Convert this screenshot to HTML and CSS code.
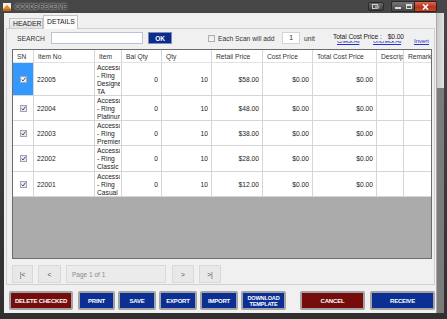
FILE: index.html
```html
<!DOCTYPE html>
<html>
<head>
<meta charset="utf-8">
<link rel="stylesheet" href="styles.css">
</head>
<body>
<div class="window">
  <div class="titlebar">
    <svg class="appicon" width="8" height="8" viewBox="0 0 8 8"><rect x="0" y="0" width="8" height="8" fill="#f4f0e4"/><path d="M0 6 L4 2 L8 6 Z" fill="#e08a1a"/><rect x="0" y="6" width="8" height="2" fill="#c86a10"/></svg>
    <span class="title">GOODS RECEIVE</span>
    <div class="caption">
      <span class="cbtn extra"><svg width="8" height="5" viewBox="0 0 8 5"><rect x="0.5" y="0.5" width="5" height="4" fill="none" stroke="#cfcfcf"/><rect x="3" y="1.5" width="4.5" height="3" fill="#9a9a9a"/></svg></span>
      <span class="cgroup">
        <span class="cbtn min"><span class="minbar"></span></span>
        <span class="cbtn max"><span class="maxbox"></span></span>
      </span>
      <span class="cbtn close"><svg width="7" height="6" viewBox="0 0 7 6"><path d="M1 0.5 L6 5.5 M6 0.5 L1 5.5" stroke="#fff" stroke-width="1.6"/></svg></span>
    </div>
  </div>
  <div class="frame">
    <div class="client">
      <div class="tabs">
        <span class="tab">HEADER</span>
        <span class="tab active">DETAILS</span>
      </div>
      <div class="panel">
        <div class="searchbar">
          <span class="lbl-search">SEARCH</span>
          <span class="input search-input"></span>
          <span class="ok">OK</span>
          <span class="scan-chk"></span>
          <span class="scan-text">Each Scan will add</span>
          <span class="input qty-input">1</span>
          <span class="unit">unit</span>
          <div class="totals">
            <div class="total-label"><span>Total Cost Price :</span><span class="total-val">$0.00</span></div>
            <div class="links">
              <span class="link l1">Check All</span>
              <span class="link l2">Uncheck All</span>
            </div>
            <span class="link l3">Invert</span>
          </div>
        </div>
        <div class="grid">
          <div class="row head">
            <div class="cell">SN</div><div class="cell">Item No</div><div class="cell">Item</div><div class="cell">Bal Qty</div><div class="cell">Qty</div><div class="cell">Retail Price</div><div class="cell">Cost Price</div><div class="cell">Total Cost Price</div><div class="cell">Descrip</div><div class="cell">Remark</div>
          </div>
          <div class="row h33">
            <div class="cell sn sel"><span class="chk"><svg width="5" height="5" viewBox="0 0 5 5"><path d="M0.6 2.6 L2 4 L4.5 0.6" fill="none" stroke="#2d4f9e" stroke-width="1"/></svg></span></div>
            <div class="cell code">22005</div><div class="cell item"><div class="clip">Accessories - Ring Designer TA</div></div><div class="cell num">0</div><div class="cell num">10</div><div class="cell num">$58.00</div><div class="cell num">$0.00</div><div class="cell num">$0.00</div><div class="cell"></div><div class="cell"></div>
          </div>
          <div class="row h25">
            <div class="cell sn"><span class="chk"><svg width="5" height="5" viewBox="0 0 5 5"><path d="M0.6 2.6 L2 4 L4.5 0.6" fill="none" stroke="#2d4f9e" stroke-width="1"/></svg></span></div>
            <div class="cell code">22004</div><div class="cell item"><div class="clip">Accessories - Ring Platinum</div></div><div class="cell num">0</div><div class="cell num">10</div><div class="cell num">$48.00</div><div class="cell num">$0.00</div><div class="cell num">$0.00</div><div class="cell"></div><div class="cell"></div>
          </div>
          <div class="row h25">
            <div class="cell sn"><span class="chk"><svg width="5" height="5" viewBox="0 0 5 5"><path d="M0.6 2.6 L2 4 L4.5 0.6" fill="none" stroke="#2d4f9e" stroke-width="1"/></svg></span></div>
            <div class="cell code">22003</div><div class="cell item"><div class="clip">Accessories - Ring Premier</div></div><div class="cell num">0</div><div class="cell num">10</div><div class="cell num">$38.00</div><div class="cell num">$0.00</div><div class="cell num">$0.00</div><div class="cell"></div><div class="cell"></div>
          </div>
          <div class="row h26">
            <div class="cell sn"><span class="chk"><svg width="5" height="5" viewBox="0 0 5 5"><path d="M0.6 2.6 L2 4 L4.5 0.6" fill="none" stroke="#2d4f9e" stroke-width="1"/></svg></span></div>
            <div class="cell code">22002</div><div class="cell item"><div class="clip">Accessories - Ring Classic</div></div><div class="cell num">0</div><div class="cell num">10</div><div class="cell num">$28.00</div><div class="cell num">$0.00</div><div class="cell num">$0.00</div><div class="cell"></div><div class="cell"></div>
          </div>
          <div class="row h25">
            <div class="cell sn"><span class="chk"><svg width="5" height="5" viewBox="0 0 5 5"><path d="M0.6 2.6 L2 4 L4.5 0.6" fill="none" stroke="#2d4f9e" stroke-width="1"/></svg></span></div>
            <div class="cell code">22001</div><div class="cell item"><div class="clip">Accessories - Ring Casual</div></div><div class="cell num">0</div><div class="cell num">10</div><div class="cell num">$12.00</div><div class="cell num">$0.00</div><div class="cell num">$0.00</div><div class="cell"></div><div class="cell"></div>
          </div>
        </div>
        <div class="pager">
          <span class="pbtn w21">|&lt;</span>
          <span class="pbtn w23">&lt;</span>
          <span class="pageinfo">Page 1 of 1</span>
          <span class="pbtn w22 gap6">&gt;</span>
          <span class="pbtn w22">&gt;|</span>
        </div>
      </div>
      <div class="actions">
        <span class="btn red w64">DELETE CHECKED</span>
        <span class="btn blue w37 g5">PRINT</span>
        <span class="btn blue w38">SAVE</span>
        <span class="btn blue w38">EXPORT</span>
        <span class="btn blue w38">IMPORT</span>
        <span class="btn blue w45 two">DOWNLOAD<br>TEMPLATE</span>
        <span class="btn red w65 g14">CANCEL</span>
        <span class="btn blue w65 g5">RECEIVE</span>
      </div>
    </div>
    <div class="vscroll"><div class="thumb"></div></div>
  </div>
</div>
</body>
</html>
```

FILE: styles.css
```css
* { box-sizing: border-box; }
html, body { margin: 0; padding: 0; }
body {
  width: 447px;
  height: 319px;
  overflow: hidden;
  font-family: "Liberation Sans", Arial, sans-serif;
  font-size: 6.7px;
  color: #222;
  background: #3a3a3a;
}
.window {
  width: 447px;
  height: 319px;
  display: flex;
  flex-direction: column;
  background: linear-gradient(#474747, #2f2f2f);
}
.titlebar {
  height: 13px;
  display: flex;
  align-items: center;
  padding-left: 3px;
}
.appicon { display: block; margin-right: 4px; }
.title {
  font-size: 6.3px;
  color: #1e1e1e;
  text-shadow: 0 0 2px #e6e6e6, 0 0 3px #d0d0d0;
  letter-spacing: -0.1px;
}
.caption {
  margin-left: auto;
  margin-right: 10px;
  display: flex;
  align-items: flex-start;
  height: 13px;
  padding-top: 1px;
}
.cbtn {
  display: flex;
  align-items: center;
  justify-content: center;
  height: 10px;
}
.extra {
  width: 16px;
  height: 9px;
  margin-top: 1px;
  border: 1px solid #2a2a2a;
  border-radius: 2px;
  background: linear-gradient(#6a6a6a, #3c3c3c);
  margin-right: 7px;
}
.cgroup {
  display: flex;
  border: 1px solid #2a2a2a;
  border-right: none;
  border-radius: 2px 0 0 2px;
  background: linear-gradient(#767676, #454545);
  height: 11px;
}
.min, .max { width: 11px; height: 9px; }
.minbar { width: 6px; height: 2px; background: #dcdcdc; margin-top: 3px; }
.maxbox { width: 6px; height: 5px; border: 1px solid #dcdcdc; border-top-width: 2px; }
.close {
  width: 23px;
  height: 11px;
  border: 1px solid #3a1a14;
  border-radius: 0 2px 2px 0;
  background: linear-gradient(#e06a52, #b8321e 55%, #c44a30);
}

.frame {
  flex: 1;
  display: flex;
  padding: 0 0 6px 4px;
}
.client {
  width: 432px;
  height: 300px;
  background: #f0f0f0;
  display: flex;
  flex-direction: column;
}
.vscroll {
  width: 8px;
  height: 300px;
  background: #7b7b7b;
  border-left: 1px solid #a8a8a8;
}
.thumb {
  height: 75px;
  background: linear-gradient(90deg, #c9c9c9, #e2e2e2);
}

.tabs {
  display: flex;
  align-items: flex-end;
  height: 15px;
  padding: 2px 0 0 5px;
}
.tab {
  height: 10px;
  width: 34px;
  border: 1px solid #c4c4c4;
  border-bottom: none;
  background: linear-gradient(#f2f2f2, #e2e2e2);
  padding-left: 3px;
  line-height: 9px;
  font-size: 6.8px;
  color: #222;
}
.tab.active {
  height: 14px;
  width: 35px;
  background: #fbfbfb;
  line-height: 12px;
  margin-bottom: -1px;
  position: relative;
  z-index: 1;
}
.panel {
  margin-left: 2px;
  width: 429px;
  height: 257px;
  border: 1px solid #cfcfcf;
  background: #f0f0f0;
  padding: 3px 0 1px 5px;
  display: flex;
  flex-direction: column;
}

.searchbar {
  height: 12px;
  display: flex;
  align-items: center;
}
.lbl-search { width: 39px; padding-left: 5px; color: #333; }
.input {
  height: 12px;
  background: #fff;
  border: 1px solid #b7c3d6;
}
.search-input { width: 92px; }
.ok {
  width: 24px;
  height: 12px;
  margin-left: 5px;
  background: #0b2c8c;
  border: 1px solid #7a8db8;
  color: #fff;
  font-weight: bold;
  display: flex;
  align-items: center;
  justify-content: center;
  font-size: 6.5px;
}
.scan-chk {
  width: 7px;
  height: 7px;
  margin-left: 36px;
  border: 1px solid #b0b0b0;
  background: linear-gradient(#e8e8e8, #fafafa);
}
.scan-text { width: 67px; padding-left: 3px; color: #333; }
.qty-input {
  width: 18px;
  text-align: center;
  line-height: 10px;
  border-color: #d3d3d3;
}
.unit { width: 33px; padding-left: 4px; color: #333; }
.totals {
  position: relative;
  width: 99px;
  height: 12px;
}
.total-label {
  position: absolute;
  left: 0;
  top: 0;
  white-space: nowrap;
  line-height: 9px;
  letter-spacing: -0.1px;
  color: #222;
}
.total-val { margin-left: 6px; }
.links {
  position: absolute;
  left: 0;
  top: 9px;
  width: 80px;
  height: 4px;
  overflow: hidden;
  font-size: 6px;
}
.link {
  position: absolute;
  color: #2233cc;
  font-size: 6px;
  text-decoration: underline;
  white-space: nowrap;
  line-height: 7px;
}
.l1 { left: 4px; top: -3px; letter-spacing: -0.3px; }
.l2 { left: 40px; top: -3px; letter-spacing: -0.3px; }
.l3 { left: 81px; top: 6px; }

.grid {
  margin-top: 5px;
  width: 420px;
  height: 210px;
  border: 1px solid #6c6c6c;
  background: #ababab;
}
.row {
  display: grid;
  grid-template-columns: 21px 61px 27px 40px 50px 51px 50px 64px 27px 27px;
  background: #fff;
}
.row.head { height: 13px; color: #333; }
.h33 { height: 33px; }
.h25 { height: 25px; }
.h26 { height: 26px; }
.cell {
  border-right: 1px solid #d6d6d6;
  border-bottom: 1px solid #d6d6d6;
  display: flex;
  align-items: center;
  padding-left: 3px;
  overflow: hidden;
  white-space: nowrap;
}
.head .cell { padding-left: 4px; border-bottom-color: #e2e2e2; }
.cell:last-child { border-right: none; }
.cell.sn { justify-content: center; padding-left: 0; }
.cell.sel { background: #3399ff; }
.chk {
  width: 7px;
  height: 7px;
  border: 1px solid #a5a5a5;
  background: #e9e9ee;
  display: flex;
  align-items: center;
  justify-content: center;
}
.sel .chk { background: #f2f2f6; }
.chk svg { display: block; }
.cell.num { justify-content: flex-end; padding-right: 3px; }
.cell.item { align-items: flex-start; padding: 1px 0 0 2px; white-space: normal; }
.clip { width: 23px; overflow: hidden; line-height: 8px; white-space: normal; }

.pager {
  margin-top: 6px;
  height: 18px;
  display: flex;
  gap: 5px;
}
.pbtn, .pageinfo {
  height: 18px;
  background: #e8e8e8;
  border: 1px solid #d9d9d9;
  display: flex;
  align-items: center;
  justify-content: center;
  color: #444;
  font-size: 6.5px;
}
.w21 { width: 21px; }
.w22 { width: 22px; }
.w23 { width: 23px; }
.gap6 { margin-left: 1px; }
.pageinfo {
  width: 100px;
  justify-content: flex-start;
  padding-left: 5px;
  color: #8a8a8a;
  background: #ebebeb;
}

.actions {
  margin-top: 6px;
  padding-left: 5px;
  height: 19px;
  display: flex;
  gap: 3px;
}
.btn {
  height: 19px;
  border: 2px solid #a3a3a3;
  border-radius: 2px;
  color: #fff;
  font-weight: bold;
  font-size: 6px;
  letter-spacing: -0.2px;
  display: flex;
  align-items: center;
  justify-content: center;
  text-align: center;
  white-space: nowrap;
}
.btn.two { line-height: 6px; font-size: 5.6px; }
.red { background: #760d0d; }
.blue { background: #0b2f92; }
.w37 { width: 37px; }
.w38 { width: 38px; }
.w45 { width: 45px; }
.w64 { width: 64px; }
.w65 { width: 65px; }
.g5 { margin-left: 2px; }
.g14 { margin-left: 11px; }
```
